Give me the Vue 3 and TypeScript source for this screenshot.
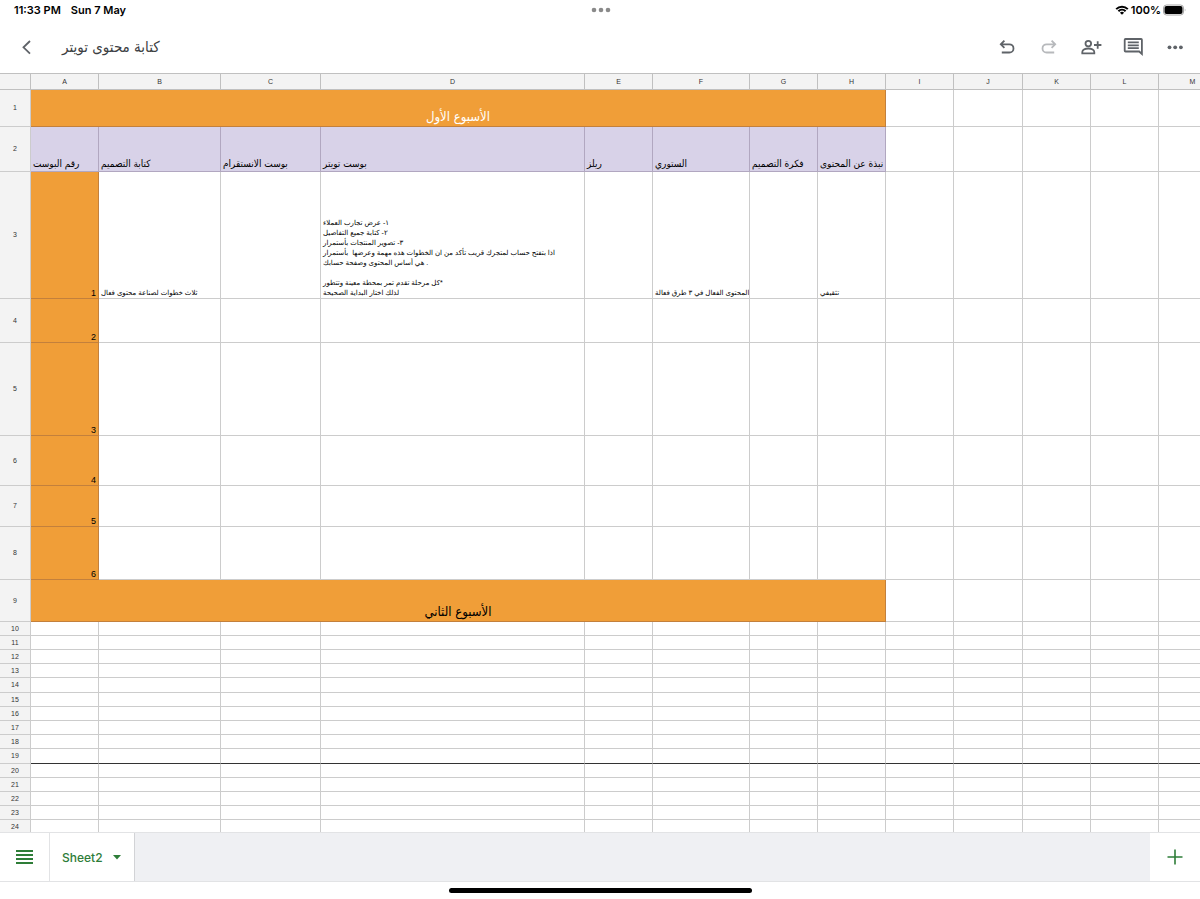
<script setup lang="ts">
interface Column {
  name: string
  width: number
}

interface Cell {
  lines: string[]
  kind?: 'week' | 'head' | 'index'
  light?: boolean
  span?: number
}

interface Row {
  id: number
  height: number
  cells: Cell[]
  frozen?: boolean
}

const columns: Column[] = [
  { name: 'A', width: 68 },
  { name: 'B', width: 122 },
  { name: 'C', width: 100 },
  { name: 'D', width: 264 },
  { name: 'E', width: 68 },
  { name: 'F', width: 97 },
  { name: 'G', width: 68 },
  { name: 'H', width: 68 },
  { name: 'I', width: 68 },
  { name: 'J', width: 69 },
  { name: 'K', width: 68 },
  { name: 'L', width: 68 },
  { name: 'M', width: 68 },
]

const tableWidth = 31 + columns.reduce((sum, c) => sum + c.width, 0)

const blank = (count: number): Cell[] => Array.from({ length: count }, () => ({ lines: [] }))
const text = (...lines: string[]): Cell => ({ lines })
const week = (title: string, light: boolean): Cell[] => [
  { lines: [title], kind: 'week', light, span: 8 },
  ...blank(5),
]
const indexed = (n: number): Cell[] => [{ lines: [String(n)], kind: 'index' }, ...blank(12)]

const headings = [
  'رقم البوست  ',
  'كتابة التصميم',
  'بوست الانستقرام',
  'بوست تويتر',
  'ريلز',
  'الستوري',
  'فكرة التصميم',
  'نبذة عن المحتوى',
]

const rows: Row[] = [
  { id: 1, height: 37, cells: week('الأسبوع الأول', true) },
  {
    id: 2,
    height: 45,
    cells: [...headings.map((h): Cell => ({ lines: [h], kind: 'head' })), ...blank(5)],
  },
  {
    id: 3,
    height: 127,
    cells: [
      { lines: ['1'], kind: 'index' },
      text('ثلاث خطوات لصناعة محتوى فعال'),
      ...blank(1),
      text(
        '١- عرض تجارب العملاء',
        '٢- كتابة جميع التفاصيل',
        '٣- تصوير المنتجات بأستمرار',
        'اذا بتفتح حساب لمتجرك قريب تأكد من ان الخطوات هذه مهمة وعرضها  بأستمرار ',
        '. هي أساس المحتوى وصفحة حسابك',
        ' ',
        '*كل مرحلة تقدم تمر بمحطة معينة وتتطور',
        'لذلك اختار البداية الصحيحة',
      ),
      ...blank(1),
      text('المحتوى الفعال في ٣ طرق فعالة'),
      ...blank(1),
      text('تثقيفي'),
      ...blank(5),
    ],
  },
  { id: 4, height: 44, cells: indexed(2) },
  { id: 5, height: 93, cells: indexed(3) },
  { id: 6, height: 50, cells: indexed(4) },
  { id: 7, height: 41, cells: indexed(5) },
  { id: 8, height: 53, cells: indexed(6) },
  { id: 9, height: 42, cells: week('الأسبوع الثاني', false) },
  ...Array.from({ length: 15 }, (_, i): Row => {
    const id = i + 10
    return { id, height: id === 14 || id === 19 ? 15 : 14, cells: blank(13), frozen: id === 19 }
  }),
]
</script>

<template>
  <div class="app">
    <div class="status">
      <div class="side"><span>11:33 PM</span><span>Sun 7 May</span></div>
      <svg class="grabber" viewBox="0 0 20 6" aria-hidden="true">
        <circle cx="3" cy="3" r="2.3" /><circle cx="10" cy="3" r="2.3" /><circle cx="17" cy="3" r="2.3" />
      </svg>
      <div class="side power">
        <svg class="wifi" viewBox="0 0 14 10" aria-hidden="true">
          <path d="M1.2 4.1a8.2 8.2 0 0 1 11.6 0M3.4 6.3a5.1 5.1 0 0 1 7.2 0" />
          <path class="dot" d="M7 9.8 4.9 7.7a3 3 0 0 1 4.2 0z" />
        </svg>
        <span>100%</span>
        <svg class="battery" viewBox="0 0 24 12" aria-hidden="true">
          <rect class="shell" x="0.5" y="1" width="20" height="10" rx="3" />
          <rect x="1.5" y="2" width="18" height="8" rx="2" />
          <path class="cap" d="M21.8 4.5q1.5 1.5 0 3z" />
        </svg>
      </div>
    </div>

    <header class="toolbar">
      <button type="button" aria-label="Back">
        <svg viewBox="0 0 24 24"><path d="M15 6 8.5 12.3 15 18.6" /></svg>
      </button>
      <h1 dir="rtl">كتابة محتوى تويتر</h1>
      <div class="actions">
        <button type="button" aria-label="Undo">
          <svg viewBox="0 0 24 24"><path d="M9.4 5.7 5.8 9.3 9.4 12.9M6 9.3H14.4a4 4 0 0 1 0 8.2H6.8" /></svg>
        </button>
        <button type="button" aria-label="Redo" disabled>
          <svg viewBox="0 0 24 24"><path d="M14.6 5.7 18.2 9.3 14.6 12.9M18 9.3H9.6a4 4 0 0 0 0 8.2H17.2" /></svg>
        </button>
        <button type="button" aria-label="Share">
          <svg viewBox="0 0 24 24">
            <circle cx="9.3" cy="8.6" r="2.8" />
            <path d="M3.3 18.4v-1.5c0-2.2 3.2-3.4 6-3.4s6 1.2 6 3.4v1.5zM18.7 6.3v7.4M15 10h7.4" />
          </svg>
        </button>
        <button type="button" aria-label="Comments">
          <svg viewBox="0 0 24 24">
            <path d="M4.5 4h15.6q.8 0 .8.8v14.2l-2.7-2.5H4.5q-.8 0-.8-.8V4.8q0-.8.8-.8z" />
            <path d="M6.8 7.4h11M6.8 10.3h11M6.8 13.2h11" />
          </svg>
        </button>
        <button type="button" aria-label="More">
          <svg class="solid" viewBox="0 0 24 24">
            <circle cx="6.5" cy="12.3" r="1.9" /><circle cx="12.2" cy="12.3" r="1.9" /><circle cx="17.9" cy="12.3" r="1.9" />
          </svg>
        </button>
      </div>
    </header>

    <main class="sheet">
      <table :style="{ width: tableWidth + 'px' }">
        <colgroup>
          <col class="gutter" />
          <col v-for="c in columns" :key="c.name" :style="{ width: c.width + 'px' }" />
        </colgroup>
        <thead>
          <tr>
            <td class="corner"></td>
            <th v-for="c in columns" :key="c.name" scope="col">{{ c.name }}</th>
          </tr>
        </thead>
        <tbody>
          <tr
            v-for="row in rows"
            :key="row.id"
            :class="{ frozen: row.frozen }"
            :style="{ height: row.height + 'px' }"
          >
            <th scope="row">{{ row.id }}</th>
            <td
              v-for="(cell, i) in row.cells"
              :key="i"
              :colspan="cell.span"
              :class="[cell.kind, { light: cell.light }]"
            >
              <p v-for="(line, n) in cell.lines" :key="n"><bdi dir="rtl">{{ line }}</bdi></p>
            </td>
          </tr>
        </tbody>
      </table>
    </main>

    <footer class="tabs">
      <button type="button" class="all" aria-label="All sheets">
        <svg viewBox="0 0 18 14"><path d="M0 1h17M0 5h17M0 9h17M0 13h17" /></svg>
      </button>
      <button type="button" class="tab">
        Sheet2
        <svg viewBox="0 0 8 5" aria-hidden="true"><path d="M0 0h8L4 4.5z" /></svg>
      </button>
      <button type="button" class="add" aria-label="Add sheet">
        <svg viewBox="0 0 16 16"><path d="M8 0.5v15M0.5 8h15" /></svg>
      </button>
    </footer>
    <div class="home"><span></span></div>
  </div>
</template>

<style>
body {
  margin: 0;
  background: #fff;
}
</style>

<style scoped>
.app {
  display: flex;
  flex-direction: column;
  height: 100vh;
  overflow: hidden;
  background: #fff;
  color: #000;
  font-family: Inter, "Liberation Sans", "DejaVu Sans", sans-serif;
}

.status {
  display: flex;
  align-items: center;
  height: 20px;
  padding: 0 13px 0 14px;
  font-size: 11px;
  font-weight: 600;
}

.side {
  display: flex;
  flex: 1;
  align-items: center;
  gap: 10px;
}

.power {
  justify-content: flex-end;
  gap: 2px;
}

.grabber {
  width: 20px;
  height: 6px;
  fill: #8a8a8a;
}

.wifi {
  width: 14px;
  height: 10px;
  fill: none;
  stroke: #000;
  stroke-width: 2;
}

.wifi .dot {
  fill: #000;
  stroke: none;
}

.battery {
  width: 24px;
  height: 12px;
}

.battery .shell {
  fill: none;
  stroke: #a6a6a6;
}

.battery .cap {
  fill: #a6a6a6;
}

.toolbar {
  display: flex;
  align-items: center;
  height: 53px;
  padding: 0 13px 0 15px;
}

button {
  display: flex;
  align-items: center;
  justify-content: center;
  margin: 0;
  padding: 0;
  border: 0;
  background: none;
  color: inherit;
  font: inherit;
}

.toolbar button {
  width: 24px;
  height: 24px;
  color: #5f6368;
}

.toolbar button:disabled {
  color: #b7b9bc;
}

.toolbar svg {
  width: 24px;
  height: 24px;
  fill: none;
  stroke: currentColor;
  stroke-width: 1.8;
}

.toolbar .solid {
  fill: currentColor;
  stroke: none;
}

h1 {
  margin: 0 0 0 23px;
  color: #3c4043;
  font-family: "DejaVu Sans Condensed", "DejaVu Sans", sans-serif;
  font-size: 15px;
  font-weight: 400;
  line-height: 20px;
}

.actions {
  display: flex;
  gap: 18px;
  margin-left: auto;
}

.sheet {
  flex: 1;
  min-height: 0;
  overflow: hidden;
}

table {
  table-layout: fixed;
  border-spacing: 0;
  border-collapse: separate;
  font-family: "Liberation Sans", "DejaVu Sans", sans-serif;
}

.gutter {
  width: 31px;
}

th,
td {
  box-sizing: border-box;
  padding: 0;
  overflow: hidden;
  border: solid #ccc;
  border-width: 0 1px 1px 0;
}

th,
.corner {
  background: #f3f3f3;
  color: #333;
  font-size: 7px;
  font-weight: 400;
  line-height: 8px;
  text-align: center;
}

thead tr {
  height: 17px;
}

thead th,
thead .corner {
  border-top: 1px solid #d5d5d5;
  border-color: #c0c0c0;
}

tbody td {
  padding: 0 2px;
  font-size: 7px;
  line-height: 10px;
  text-align: left;
  vertical-align: bottom;
}

p {
  margin: 0;
  white-space: pre;
}

.week,
.head,
.index {
  border-color: rgba(60, 40, 70, 0.25);
}

.week,
.head {
  font-family: "DejaVu Sans Condensed", "DejaVu Sans", sans-serif;
}

.week,
.index {
  background: #f09e38;
}

.week {
  font-size: 13px;
  line-height: 18px;
  text-align: center;
}

.light {
  color: #fff;
}

.head {
  background: #d8d2e8;
  font-size: 10px;
  line-height: 14px;
}

.index {
  font-size: 9px;
  text-align: right;
}

.frozen td {
  border-bottom-color: #333;
}

.tabs {
  display: flex;
  height: 48px;
  border: solid #e2e3e5;
  border-width: 1px 0;
  box-sizing: content-box;
  background: #eff0f3;
  color: #2e7d38;
}

.all,
.tab,
.add {
  background: #fff;
}

.all {
  width: 50px;
  border-right: 1px solid #e2e3e5;
}

.all svg {
  width: 18px;
  height: 14px;
  stroke: currentColor;
  stroke-width: 2;
}

.tab {
  gap: 10px;
  padding: 0 13px 0 12px;
  border-right: 1px solid #d2d3d6;
  font-size: 12px;
  font-weight: 500;
}

.tab svg {
  width: 8px;
  height: 5px;
  fill: currentColor;
}

.add {
  width: 50px;
  margin-left: auto;
}

.add svg {
  width: 16px;
  height: 16px;
  stroke: currentColor;
  stroke-width: 1.6;
}

.home {
  display: flex;
  align-items: center;
  justify-content: center;
  height: 17px;
}

.home span {
  width: 303px;
  height: 5px;
  border-radius: 3px;
  background: #000;
}
</style>
